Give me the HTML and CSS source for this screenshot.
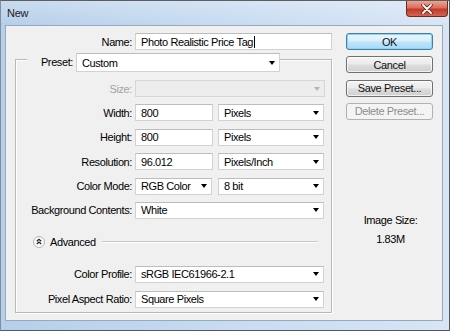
FILE: index.html
```html
<!DOCTYPE html>
<html lang="en">
<head>
    <meta charset="UTF-8">
    <title>New</title>
    <link rel="stylesheet" href="styles.css">
</head>
<body>
<div class="window">
    <div class="titlebar">
        <span class="title">New</span>
        <div class="close">
            <svg width="14" height="10" viewBox="0 0 14 10">
                <path d="M3 1 L11 9 M11 1 L3 9" stroke="#5a1c16" stroke-width="3.4" stroke-linecap="round"/>
                <path d="M3 1 L11 9 M11 1 L3 9" stroke="#fff" stroke-width="1.8" stroke-linecap="round"/>
            </svg>
        </div>
    </div>

    <div class="client">
        <div class="left">
            <div class="name-row">
                <span class="lbl name-lbl">Name:</span>
                <div class="field name-field">Photo Realistic Price Tag<span class="caret"></span></div>
            </div>

            <div class="group">
                <div class="preset-row">
                    <span class="preset-lbl">Preset:</span>
                    <div class="select preset-select">Custom</div>
                </div>

                <div class="row first-row">
                    <span class="lbl disabled">Size:</span>
                    <div class="select disabled-select wide"></div>
                </div>
                <div class="row">
                    <span class="lbl">Width:</span>
                    <div class="field num">800</div>
                    <div class="select unit">Pixels</div>
                </div>
                <div class="row">
                    <span class="lbl">Height:</span>
                    <div class="field num">800</div>
                    <div class="select unit">Pixels</div>
                </div>
                <div class="row">
                    <span class="lbl">Resolution:</span>
                    <div class="field num">96.012</div>
                    <div class="select unit">Pixels/Inch</div>
                </div>
                <div class="row">
                    <span class="lbl">Color Mode:</span>
                    <div class="select num mode">RGB Color</div>
                    <div class="select unit">8 bit</div>
                </div>
                <div class="row">
                    <span class="lbl">Background Contents:</span>
                    <div class="select wide">White</div>
                </div>

                <div class="advanced">
                    <span class="adv-icon">
                        <svg width="12" height="12" viewBox="0 0 12 12">
                            <circle cx="6" cy="6" r="5.5" fill="#fafafa" stroke="#b4b4b4"/>
                            <path d="M3.8 5.3 L6 3.3 L8.2 5.3 M3.8 8 L6 6 L8.2 8" fill="none" stroke="#222" stroke-width="1.2"/>
                        </svg>
                    </span>
                    <span class="adv-text">Advanced</span>
                    <span class="adv-line"></span>
                </div>

                <div class="row profile-row">
                    <span class="lbl">Color Profile:</span>
                    <div class="select wide">sRGB IEC61966-2.1</div>
                </div>
                <div class="row">
                    <span class="lbl">Pixel Aspect Ratio:</span>
                    <div class="select wide">Square Pixels</div>
                </div>
            </div>
        </div>

        <div class="right">
            <div class="btn default">OK</div>
            <div class="btn">Cancel</div>
            <div class="btn">Save Preset...</div>
            <div class="btn off">Delete Preset...</div>

            <div class="image-size">
                <span>Image Size:</span>
                <span>1.83M</span>
            </div>
        </div>
    </div>
</div>
</body>
</html>
```

FILE: styles.css
```css
 * {
     box-sizing: border-box;
 }

 body {
     margin: 0;
     width: 450px;
     height: 331px;
     overflow: hidden;
     font-family: "Liberation Sans", Arial, sans-serif;
     font-size: 11px;
     letter-spacing: -0.4px;
     color: #000;
 }

 .window {
     height: 331px;
     display: flex;
     flex-direction: column;
     border-top: 1px solid #5e5e5e;
     border-left: 1px solid #7f8ea0;
     border-right: 1px solid #55595e;
     border-bottom: 1px solid #55595e;
     background: linear-gradient(to right, #b6cfea, #c9dcf2 55%, #d7e5f5);
 }

 .titlebar {
     height: 24px;
     display: flex;
     justify-content: space-between;
     align-items: flex-start;
     padding-left: 6px;
     background: linear-gradient(to bottom, rgba(255,255,255,0.25), rgba(255,255,255,0));
 }

 .title {
     line-height: 24px;
     font-size: 11px;
     letter-spacing: -0.3px;
     color: #1a1a1a;
 }

 .close {
     width: 42px;
     height: 16px;
     margin-right: 1px;
     border: 1px solid #6b2a22;
     border-top: none;
     border-radius: 0 0 4px 4px;
     background: linear-gradient(to bottom, #eba595, #d9705c 45%, #c23a28 55%, #d66450);
     display: flex;
     justify-content: center;
     align-items: center;
 }

 .client {
     flex: 1;
     margin: 0 6px 9px 4px;
     border: 1px solid #97a9bd;
     background-color: #f0f0f0;
     display: flex;
 }

 .left {
     width: 340px;
     padding-top: 7px;
 }

 .name-row {
     display: flex;
     align-items: center;
     height: 17px;
 }

 .lbl {
     text-align: right;
     white-space: nowrap;
 }

 .name-lbl {
     width: 126px;
     margin-right: 3px;
 }

 .field,
 .select {
     height: 17px;
     background-color: #fff;
     border: 1px solid #d2d2d2;
     border-top-color: #bdbdbd;
     padding-left: 5px;
     display: flex;
     align-items: center;
     white-space: nowrap;
 }

 .select::after {
     content: "";
     margin-left: auto;
     margin-right: 4px;
     border-left: 3px solid transparent;
     border-right: 3px solid transparent;
     border-top: 4px solid #000;
 }

 .name-field {
     width: 197px;
 }

 .caret {
     width: 1px;
     height: 12px;
     background-color: #000;
     margin-left: 1px;
 }

 .group {
     margin: 9px 0 0 9px;
     width: 317px;
     border: 1px solid #b9b9b9;
     box-shadow: inset 1px 1px 0 #fff, 1px 1px 0 #fff;
     padding-bottom: 4px;
     display: flex;
     flex-direction: column;
 }

 .preset-row {
     display: flex;
     align-items: center;
     margin: -7px 0 0 11px;
     width: fit-content;
 }

 .preset-lbl {
     width: 49px;
     padding-right: 3px;
     line-height: 19px;
     text-align: right;
     background-color: #f0f0f0;
 }

 .preset-select {
     width: 204px;
     height: 19px;
 }

 .row {
     display: flex;
     align-items: center;
     height: 17px;
     margin-top: 7.4px;
 }

 .row .lbl {
     width: 116px;
     margin-right: 3px;
 }

 .first-row {
     margin-top: 8px;
 }

 .num {
     width: 78px;
     margin-right: 5px;
 }

 .mode {
     width: 77px;
     margin-right: 6px;
 }

 .unit {
     width: 106px;
 }

 .wide {
     width: 189px;
 }

 .disabled {
     color: #a3a3a3;
 }

 .disabled-select {
     background-color: #ededed;
     border-color: #d6d6d6;
     width: 190px;
 }

 .disabled-select::after {
     border-top-color: #b5b5b5;
 }

 .advanced {
     display: flex;
     align-items: center;
     height: 12px;
     margin: 17px 13px 0 17px;
 }

 .adv-icon {
     display: flex;
 }

 .adv-text {
     margin-left: 5px;
 }

 .adv-line {
     flex: 1;
     margin-left: 6px;
     border-top: 1px solid #c8c8c8;
     border-bottom: 1px solid #fff;
 }

 .profile-row {
     margin-top: 18px;
 }

 .row + .row:last-child {
     margin-top: 8px;
 }

 .right {
     padding-top: 7px;
     width: 87px;
     display: flex;
     flex-direction: column;
 }

 .btn {
     height: 17px;
     margin-bottom: 6.3px;
     border: 1px solid #707070;
     border-radius: 3px;
     background: linear-gradient(to bottom, #f4f4f4, #ebebeb 48%, #dddddd 52%, #d0d0d0);
     box-shadow: inset 0 0 0 1px rgba(255,255,255,0.7);
     display: flex;
     justify-content: center;
     align-items: center;
     color: #111;
 }

 .btn.default {
     border-color: #3c7fb1;
     background: linear-gradient(to bottom, #eaf6fd, #d9f0fc 48%, #bee6fd 52%, #a7d9f5);
     box-shadow: inset 0 0 0 1px #8fd3f3;
 }

 .btn.off {
     border-color: #adb2b5;
     background: #f4f4f4;
     box-shadow: none;
     color: #8d8d8d;
 }

 .image-size {
     margin-top: 87px;
     display: flex;
     flex-direction: column;
     align-items: center;
     gap: 5px;
     line-height: 14px;
     padding-left: 2px;
 }
```
